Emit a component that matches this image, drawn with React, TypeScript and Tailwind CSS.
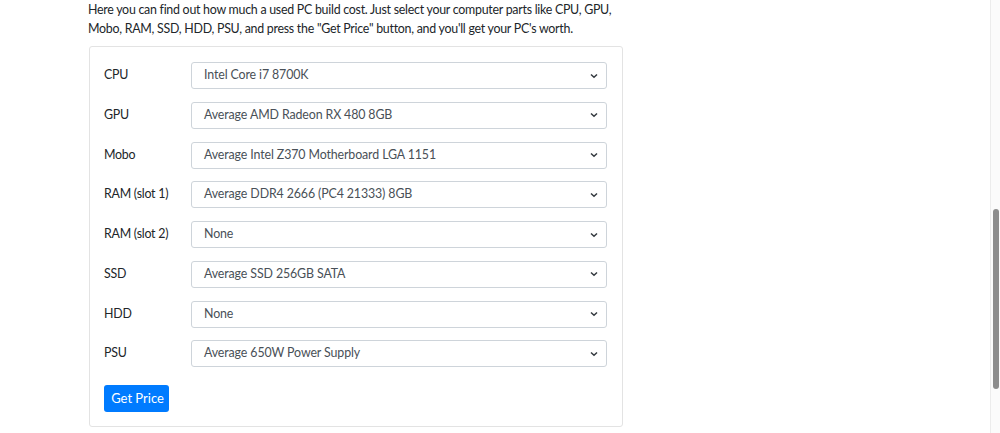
import React from "react";

const rows: [string, string][] = [
  ["CPU", "Intel Core i7 8700K"],
  ["GPU", "Average AMD Radeon RX 480 8GB"],
  ["Mobo", "Average Intel Z370 Motherboard LGA 1151"],
  ["RAM (slot 1)", "Average DDR4 2666 (PC4 21333) 8GB"],
  ["RAM (slot 2)", "None"],
  ["SSD", "Average SSD 256GB SATA"],
  ["HDD", "None"],
  ["PSU", "Average 650W Power Supply"],
];

function Chevron() {
  return (
    <svg width="8" height="6" viewBox="0 0 8 6" className="shrink-0">
      <path d="M1 1.5 L4 4.3 L7 1.5" fill="none" stroke="#343a40" strokeWidth="1.5" />
    </svg>
  );
}

export default function App() {
  return (
    <div
      className="relative w-[1000px] h-[433px] overflow-hidden bg-white text-[#212529]"
      style={{ fontFamily: 'Lato, "Open Sans", sans-serif' }}
    >
      <div className="pl-[88px] w-[700px]">
        <p className="text-[12.4px] leading-[19px] tracking-[-0.26px]">
          Here you can find out how much a used PC build cost. Just select your computer parts like CPU, GPU,
          <br />
          Mobo, RAM, SSD, HDD, PSU, and press the "Get Price" button, and you'll get your PC's worth.
        </p>
        <div className="mt-[8px] ml-[1px] w-[534px] h-[381px] border border-[#e3e3e3] rounded-[3px] pt-[15px] pl-[14px] pr-[15px]">
          <div className="flex flex-col gap-[12.75px]">
            {rows.map(([label, value]) => (
              <div key={label} className="flex items-center h-[27px]">
                <div className="w-[87px] text-[12.4px] tracking-[-0.25px]">{label}</div>
                <div className="flex-1 h-[27px] border border-[#ced4da] rounded-[3px] flex items-center justify-between pl-[12px] pr-[8px] text-[12.4px] tracking-[-0.12px] text-[#495057]">
                  <span>{value}</span>
                  <Chevron />
                </div>
              </div>
            ))}
          </div>
          <button className="mt-[17.5px] h-[27px] w-[65px] rounded-[3px] bg-[#007bff] text-white text-[13px] flex items-center justify-center pl-[2px]">
            Get Price
          </button>
        </div>
      </div>
      <div className="absolute right-0 top-0 w-[10px] h-[433px] bg-[#fbfbfb] border-l border-[#ececec]">
        <div className="absolute left-[2px] top-[209px] w-[6px] h-[180px] rounded-full bg-[#8d8d8d]" />
      </div>
    </div>
  );
}
